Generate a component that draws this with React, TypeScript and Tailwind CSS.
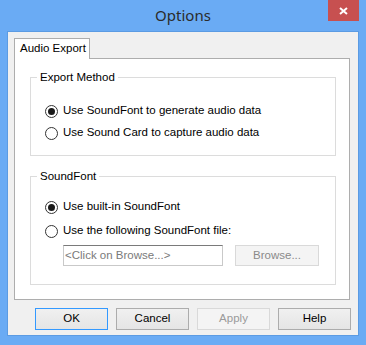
import React from "react";

function Radio({ checked, label }: { checked?: boolean; label: string }) {
  return (
    <div className="flex items-center h-[16px]">
      <span className="w-[13px] h-[13px] rounded-full border border-[#333333] bg-white flex items-center justify-center shrink-0">
        {checked && <span className="w-[7px] h-[7px] rounded-full bg-[#1a1a1a]" />}
      </span>
      <span className="ml-[5px] whitespace-nowrap">{label}</span>
    </div>
  );
}

function Btn({ label, primary, disabled }: { label: string; primary?: boolean; disabled?: boolean }) {
  return (
    <div
      className={
        "w-[73px] h-[22px] flex items-center justify-center border " +
        (disabled
          ? "border-[#d9d9d9] bg-[#f4f4f4] text-[#9a9a9a]"
          : primary
          ? "border-[#3399ff] bg-gradient-to-b from-[#f0f0f0] to-[#e5e5e5] text-black"
          : "border-[#acacac] bg-gradient-to-b from-[#f0f0f0] to-[#e5e5e5] text-black")
      }
    >
      {label}
    </div>
  );
}

export default function App() {
  return (
    <div
      className="relative w-[366px] h-[345px] bg-[#6aabf4] flex flex-col text-[11.5px] text-black"
      style={{ fontFamily: '"Liberation Sans", Arial, sans-serif' }}
    >
      <div
        className="h-[31px] flex items-center justify-center text-[15px] text-[#2b2b2b] pb-[1px]"
        style={{ fontFamily: '"Noto Sans", "Open Sans", sans-serif' }}
      >
        Options
      </div>
      <div className="absolute top-0 right-[7px] w-[31px] h-[21px] bg-[#c75050] flex items-center justify-center">
        <svg width="9" height="8" viewBox="0 0 9 8">
          <path d="M1 1 L8 7 M8 1 L1 7" stroke="white" strokeWidth="2" />
        </svg>
      </div>
      <div className="mx-[7px] mb-[9px] flex-1 border border-[#5b9be3] bg-[#f0f0f0] flex flex-col pt-[6px] pl-[6px] pr-[8px]">
        <div className="relative z-10 w-[76px] h-[21px] -mb-[1px] bg-white border border-b-0 border-[#adadad] flex items-center pl-[5px]">
          Audio Export
        </div>
        <div className="h-[242px] bg-white border border-[#adadad] flex flex-col pl-[15px] pr-[13px]">
          <fieldset className="mt-[11px] border border-[#dcdcdc]">
            <legend className="ml-[6px] px-[3px] leading-[14px]">Export Method</legend>
            <div className="pl-[14px] pt-[19px] pb-[14px] flex flex-col gap-[6px]">
              <Radio checked label="Use SoundFont to generate audio data" />
              <Radio label="Use Sound Card to capture audio data" />
            </div>
          </fieldset>
          <fieldset className="mt-[13px] border border-[#dcdcdc]">
            <legend className="ml-[6px] px-[3px] leading-[14px]">SoundFont</legend>
            <div className="pl-[14px] pt-[16px] pb-[18px] flex flex-col">
              <Radio checked label="Use built-in SoundFont" />
              <div className="mt-[8px]">
                <Radio label="Use the following SoundFont file:" />
              </div>
              <div className="mt-[6px] flex items-center pl-[18px]">
                <div className="w-[160px] h-[21px] bg-white border border-[#c9c9c9] border-t-[#7a7a7a] flex items-center pl-[1px] text-[#7a7a7a]">
                  &lt;Click on Browse...&gt;
                </div>
                <div className="ml-[12px] w-[84px] h-[21px] border border-[#d9d9d9] bg-[#f4f4f4] text-[#8a8a8a] flex items-center justify-center">
                  Browse...
                </div>
              </div>
            </div>
          </fieldset>
        </div>
        <div className="mt-[8px] flex justify-end gap-[8px] -mr-[1px]">
          <Btn label="OK" primary />
          <Btn label="Cancel" />
          <Btn label="Apply" disabled />
          <Btn label="Help" />
        </div>
      </div>
    </div>
  );
}
